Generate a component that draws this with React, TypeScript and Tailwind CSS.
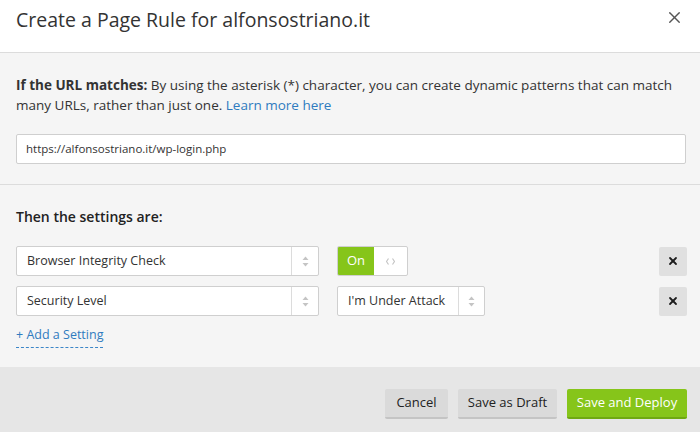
import { X } from "lucide-react";

function Arrows() {
  return (
    <svg width="7" height="11" viewBox="0 0 7 11" className="text-[#c4c4c4]">
      <path d="M3.5 0.5 L6.5 4 L0.5 4 Z" fill="currentColor" />
      <path d="M3.5 10.5 L6.5 7 L0.5 7 Z" fill="currentColor" />
    </svg>
  );
}

function Select({ label, width, arrowWidth }: { label: string; width: string; arrowWidth: string }) {
  return (
    <div className={`flex h-[30px] ${width} items-center rounded-[2px] border border-[#cfcfcf] bg-white`}>
      <span className="flex-1 truncate pl-[10px] text-[12.5px] text-[#333]">{label}</span>
      <span className={`flex h-full ${arrowWidth} items-center justify-center border-l border-[#dcdcdc]`}>
        <Arrows />
      </span>
    </div>
  );
}

function RemoveButton() {
  return (
    <button className="ml-auto flex h-[29px] w-[28px] items-center justify-center rounded-[2px] bg-[#e0e0e0] text-[#1e1e1e]">
      <X className="h-[12px] w-[12px]" strokeWidth={3.6} />
    </button>
  );
}

export default function App() {
  return (
    <div className="flex h-[432px] w-[700px] flex-col overflow-hidden font-['Open_Sans',sans-serif] text-[#333]">
      {/* header */}
      <div className="flex h-[53px] shrink-0 items-center justify-between border-b border-[#dcdcdc] bg-white pl-4 pr-[16px]">
        <h1 className="-mt-[12px] text-[19.5px] font-normal text-[#333]">Create a Page Rule for alfonsostriano.it</h1>
        <button className="-mt-[18px] text-[#555]">
          <X className="h-[19px] w-[19px]" strokeWidth={1.7} />
        </button>
      </div>

      {/* url section */}
      <div className="shrink-0 border-b border-[#dcdcdc] bg-[#f5f5f5] pb-[20px] pl-4 pr-[14px] pt-[22px]">
        <p className="text-[13.5px] leading-[20px]">
          <b className="font-bold">If the URL matches:</b> By using the asterisk (*) character, you can create dynamic
          patterns that can match many URLs, rather than just one.{" "}
          <a className="text-[#2f7bbf]">Learn more here</a>
        </p>
        <div className="mt-[19px] flex h-[30px] items-center rounded-[2px] border border-[#cfcfcf] bg-white pl-[9px] text-[11.5px] text-[#333]">
          https://alfonsostriano.it/wp-login.php
        </div>
      </div>

      {/* settings section */}
      <div className="flex-1 bg-[#f5f5f5] pl-4 pr-[13px] pt-[22px]">
        <h2 className="text-[14px] font-semibold leading-[20px] text-[#222]">Then the settings are:</h2>
        <div className="mt-[19px] flex flex-col gap-[10px]">
          <div className="flex items-center">
            <Select label="Browser Integrity Check" width="w-[303px]" arrowWidth="w-[27px]" />
            <div className="ml-[18px] flex h-[30px] w-[71px] overflow-hidden rounded-[2px] border border-[#cfcfcf] bg-white">
              <span className="flex w-[36px] items-center justify-center bg-[#86c51a] text-[13px] text-white">On</span>
              <span className="flex flex-1 items-center justify-center">
                <svg width="9" height="7" viewBox="0 0 9 7" className="text-[#c4c4c4]">
                  <path d="M2.5 0.5 L0.5 3.5 L2.5 6.5" fill="none" stroke="currentColor" strokeWidth="1.2" />
                  <path d="M6.5 0.5 L8.5 3.5 L6.5 6.5" fill="none" stroke="currentColor" strokeWidth="1.2" />
                </svg>
              </span>
            </div>
            <RemoveButton />
          </div>
          <div className="flex items-center">
            <Select label="Security Level" width="w-[303px]" arrowWidth="w-[27px]" />
            <div className="ml-[18px]">
              <Select label="I'm Under Attack" width="w-[148px]" arrowWidth="w-[26px]" />
            </div>
            <RemoveButton />
          </div>
        </div>
        <a className="mt-[9px] inline-block border-b border-dashed border-[#3b86c8] pb-[2px] text-[12.5px] leading-[20px] text-[#2f7bbf]">
          + Add a Setting
        </a>
      </div>

      {/* footer */}
      <div className="flex h-[65px] shrink-0 items-start justify-end gap-[10px] bg-[#e6e6e6] pr-[13px] pt-[22px]">
        <button className="h-[30px] w-[63px] rounded-[2px] border-b-2 border-[#c4c4c4] bg-[#dadada] text-[13px] text-[#222]">
          Cancel
        </button>
        <button className="h-[30px] w-[99px] rounded-[2px] border-b-2 border-[#c4c4c4] bg-[#dadada] text-[13px] text-[#222]">
          Save as Draft
        </button>
        <button className="h-[30px] w-[120px] rounded-[2px] border-b-2 border-[#6fa812] bg-[#86c51a] text-[13px] text-white">
          Save and Deploy
        </button>
      </div>
    </div>
  );
}
